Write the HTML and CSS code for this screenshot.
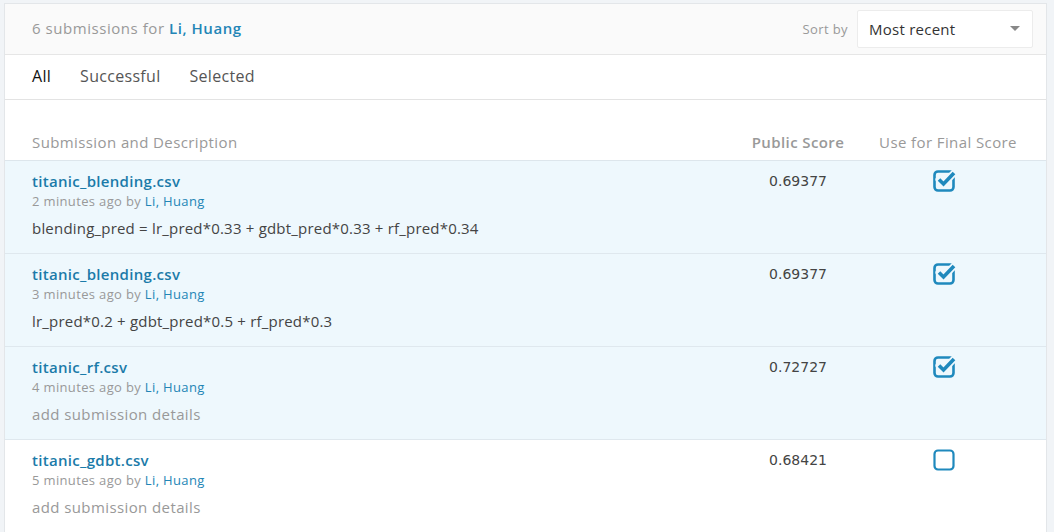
FILE: index.html
```html
<!DOCTYPE html>
<html>
<head>
<meta charset="utf-8">
<link rel="stylesheet" href="styles.css">
</head>
<body>
<div class="card">
  <div class="head">
    <div class="title">6 submissions for <a class="user">Li, Huang</a></div>
    <div class="sort">
      <span class="sort-label">Sort by</span>
      <div class="select"><span>Most recent</span><span class="caret"></span></div>
    </div>
  </div>
  <div class="tabs">
    <span class="tab active">All</span>
    <span class="tab">Successful</span>
    <span class="tab">Selected</span>
  </div>
  <div class="table">
    <div class="row thead">
      <div class="c1">Submission and Description</div>
      <div class="c2 bold">Public Score</div>
      <div class="c3">Use for Final Score</div>
    </div>
    <div class="row sel">
      <div class="c1">
        <div class="fname">titanic_blending.csv</div>
        <div class="meta">2 minutes ago by <a class="user">Li, Huang</a></div>
        <div class="desc">blending_pred = lr_pred*0.33 + gdbt_pred*0.33 + rf_pred*0.34</div>
      </div>
      <div class="c2 score">0.69377</div>
      <div class="c3"><svg class="cb" viewBox="0 0 26 26"><rect x="2.5" y="4.5" width="19" height="19" rx="3.5" fill="none" stroke="#1f89bd" stroke-width="2.6"/><path d="M7 12.5 L11.5 17 L22 6" fill="none" stroke="#eef8fd" stroke-width="7" stroke-linecap="round"/><path d="M7 12.5 L11.5 17 L22 6" fill="none" stroke="#1f89bd" stroke-width="3.6"/></svg></div>
    </div>
    <div class="row sel">
      <div class="c1">
        <div class="fname">titanic_blending.csv</div>
        <div class="meta">3 minutes ago by <a class="user">Li, Huang</a></div>
        <div class="desc">lr_pred*0.2 + gdbt_pred*0.5 + rf_pred*0.3</div>
      </div>
      <div class="c2 score">0.69377</div>
      <div class="c3"><svg class="cb" viewBox="0 0 26 26"><rect x="2.5" y="4.5" width="19" height="19" rx="3.5" fill="none" stroke="#1f89bd" stroke-width="2.6"/><path d="M7 12.5 L11.5 17 L22 6" fill="none" stroke="#eef8fd" stroke-width="7" stroke-linecap="round"/><path d="M7 12.5 L11.5 17 L22 6" fill="none" stroke="#1f89bd" stroke-width="3.6"/></svg></div>
    </div>
    <div class="row sel">
      <div class="c1">
        <div class="fname">titanic_rf.csv</div>
        <div class="meta">4 minutes ago by <a class="user">Li, Huang</a></div>
        <div class="desc muted">add submission details</div>
      </div>
      <div class="c2 score">0.72727</div>
      <div class="c3"><svg class="cb" viewBox="0 0 26 26"><rect x="2.5" y="4.5" width="19" height="19" rx="3.5" fill="none" stroke="#1f89bd" stroke-width="2.6"/><path d="M7 12.5 L11.5 17 L22 6" fill="none" stroke="#eef8fd" stroke-width="7" stroke-linecap="round"/><path d="M7 12.5 L11.5 17 L22 6" fill="none" stroke="#1f89bd" stroke-width="3.6"/></svg></div>
    </div>
    <div class="row">
      <div class="c1">
        <div class="fname">titanic_gdbt.csv</div>
        <div class="meta">5 minutes ago by <a class="user">Li, Huang</a></div>
        <div class="desc muted">add submission details</div>
      </div>
      <div class="c2 score">0.68421</div>
      <div class="c3"><svg class="cb" viewBox="0 0 26 26"><rect x="2.5" y="4.5" width="19" height="19" rx="3.5" fill="none" stroke="#1f89bd" stroke-width="2.2"/></svg></div>
    </div>
  </div>
</div>
</body>
</html>
```

FILE: styles.css
```css
html, body {
  margin: 0;
  padding: 0;
  background: #f1f4f7;
  font-family: "Open Sans", "Liberation Sans", sans-serif;
  font-size: 15px;
  letter-spacing: 0.25px;
  color: #444;
}
.card {
  margin: 3px 7px 0 4px;
  background: #fff;
  border: 1px solid #e3e6e9;
  border-bottom: none;
  height: 529px;
  overflow: hidden;
}
.user {
  color: #2385b6;
  text-decoration: none;
}
.head {
  height: 50px;
  background: #fafafa;
  border-bottom: 1px solid #e6e6e6;
  display: flex;
  align-items: center;
  justify-content: space-between;
  padding: 0 13px 0 27px;
}
.title {
  color: #999;
  font-size: 15px;
  letter-spacing: 0.55px;
  margin-top: -3px;
}
.title .user {
  font-weight: 600;
}
.sort {
  display: flex;
  align-items: center;
  gap: 9px;
}
.sort-label {
  font-size: 13px;
  color: #999;
  letter-spacing: 0.4px;
}
.select {
  width: 176px;
  height: 38px;
  margin-top: -1px;
  background: #fff;
  border: 1px solid #ececec;
  border-radius: 2px;
  display: flex;
  align-items: center;
  justify-content: space-between;
  padding: 0 12px 0 11px;
  box-sizing: border-box;
  color: #333;
  font-size: 15px;
}
.caret {
  width: 0;
  height: 0;
  border-left: 5px solid transparent;
  border-right: 5px solid transparent;
  border-top: 5px solid #888;
}
.tabs {
  height: 44px;
  border-bottom: 1px solid #e3e3e3;
  display: flex;
  align-items: center;
  gap: 29px;
  padding-left: 27px;
}
.tab {
  color: #555;
  font-size: 16px;
  letter-spacing: 0.3px;
  margin-top: -2px;
}
.tab.active {
  color: #111;
}
.table {
  padding-top: 24px;
}
.row {
  display: grid;
  grid-template-columns: 1fr 100px 140px;
  column-gap: 30px;
  padding: 0 28px 0 27px;
  height: 92px;
  border-bottom: 1px solid #dfe8ee;
}
.row.thead {
  height: 36px;
  align-items: center;
  color: #999;
  letter-spacing: 0.4px;
  border-bottom: 1px solid #dde6ec;
}
.thead .c2, .thead .c3 {
  text-align: center;
  white-space: nowrap;
}
.bold {
  font-weight: 600;
}
.row.sel {
  background: #eef8fd;
}
.fname {
  color: #1b7ba9;
  font-weight: 600;
  margin-top: 9px;
  line-height: 22px;
  letter-spacing: 0.3px;
}
.meta {
  font-size: 13px;
  color: #999;
  line-height: 18px;
  letter-spacing: 0.35px;
}
.desc {
  margin-top: 7px;
  line-height: 22px;
  color: #444;
  letter-spacing: 0.2px;
}
.desc.muted {
  color: #999;
  letter-spacing: 0.4px;
}
.score {
  text-align: center;
  margin-top: 9px;
  line-height: 22px;
  font-family: "DejaVu Sans", sans-serif;
  font-size: 14px;
  letter-spacing: 0;
  color: #444;
}
.c3 {
  display: flex;
  justify-content: center;
  align-items: flex-start;
}
.cb {
  width: 26px;
  height: 26px;
  margin-top: 6px;
  margin-right: 6px;
}
```
